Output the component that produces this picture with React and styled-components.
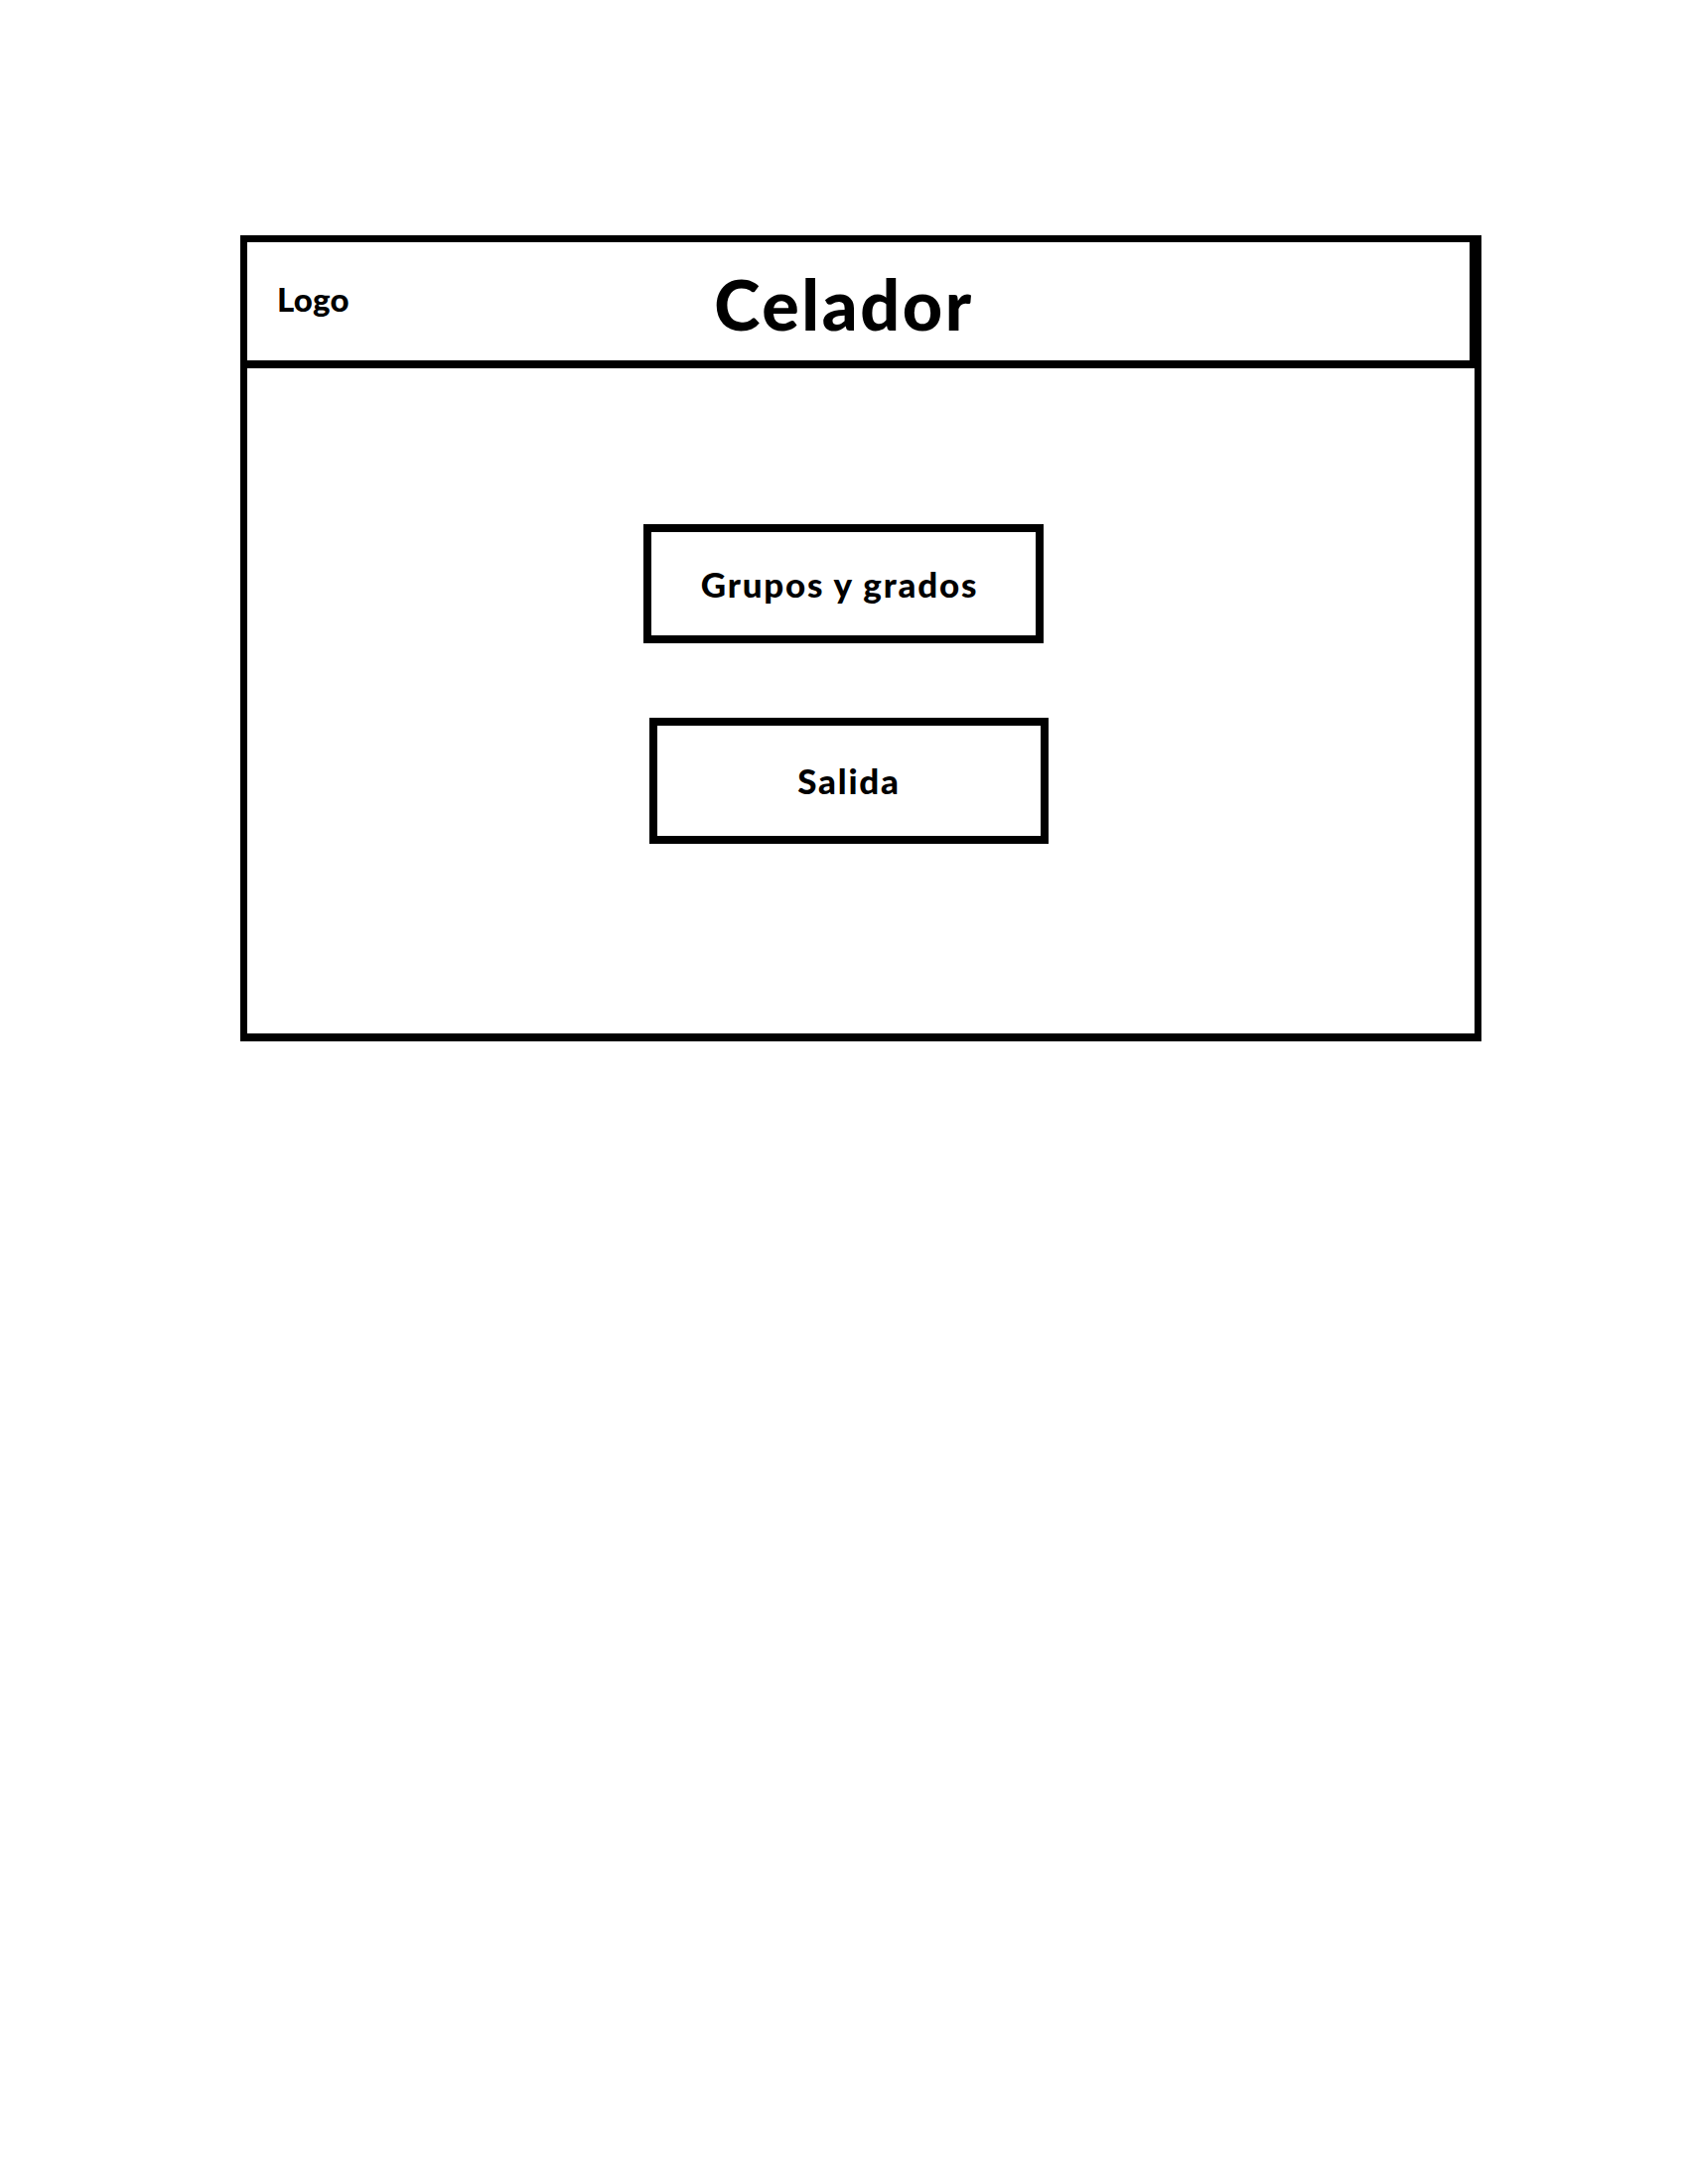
import React from "react";
import styled, { createGlobalStyle } from "styled-components";

const Global = createGlobalStyle`
  html, body { margin: 0; padding: 0; background: #ffffff; }
  body { font-family: "Lato", "Open Sans", sans-serif; color: #000; }
`;

const Page = styled.div`
  width: 1700px;
  min-height: 2200px;
  padding: 237px 0 0 242px;
  box-sizing: border-box;
`;

const Frame = styled.div`
  width: 1250px;
  height: 812px;
  box-sizing: border-box;
  border: 7px solid #000;
  border-bottom-width: 8px;
  display: flex;
  flex-direction: column;
`;

const Header = styled.header`
  height: 127px;
  box-sizing: border-box;
  border-bottom: 8px solid #000;
  border-right: 5px solid #000;
  display: flex;
  align-items: center;
  padding-left: 30px;
`;

const LogoSlot = styled.div`
  width: 371px;
  flex-shrink: 0;
  font-weight: 900;
  font-size: 33px;
  letter-spacing: 0.3px;
  line-height: 1;
  margin-top: -5px;
`;

const Title = styled.h1`
  margin: 0;
  width: 400px;
  text-align: center;
  font-weight: 900;
  font-size: 70px;
  letter-spacing: 2.6px;
  line-height: 1;
  margin-top: 4px;
`;

const Body = styled.main`
  flex: 1;
  display: flex;
  flex-direction: column;
  align-items: flex-start;
  padding-top: 157px;
  gap: 75px;
`;

const MenuButton = styled.button`
  margin-left: ${(p) => p.$offset}px;
  width: ${(p) => p.$w}px;
  height: ${(p) => p.$h}px;
  box-sizing: border-box;
  border: 8px solid #000;
  background: #fff;
  color: #000;
  font-family: "Lato", "Open Sans", sans-serif;
  font-weight: 900;
  font-size: 35px;
  letter-spacing: 1.8px;
  line-height: 1;
  padding: 0 ${(p) => p.$padRight || 0}px 0 0;
  display: flex;
  align-items: center;
  justify-content: center;
  cursor: pointer;
`;

export default function App() {
  return (
    <>
      <Global />
      <Page>
        <Frame>
          <Header>
            <LogoSlot>Logo</LogoSlot>
            <Title>Celador</Title>
          </Header>
          <Body>
            <MenuButton $offset={399} $w={403} $h={120} $padRight={8}>
              Grupos y grados
            </MenuButton>
            <MenuButton $offset={405} $w={402} $h={127}>
              Salida
            </MenuButton>
          </Body>
        </Frame>
      </Page>
    </>
  );
}
